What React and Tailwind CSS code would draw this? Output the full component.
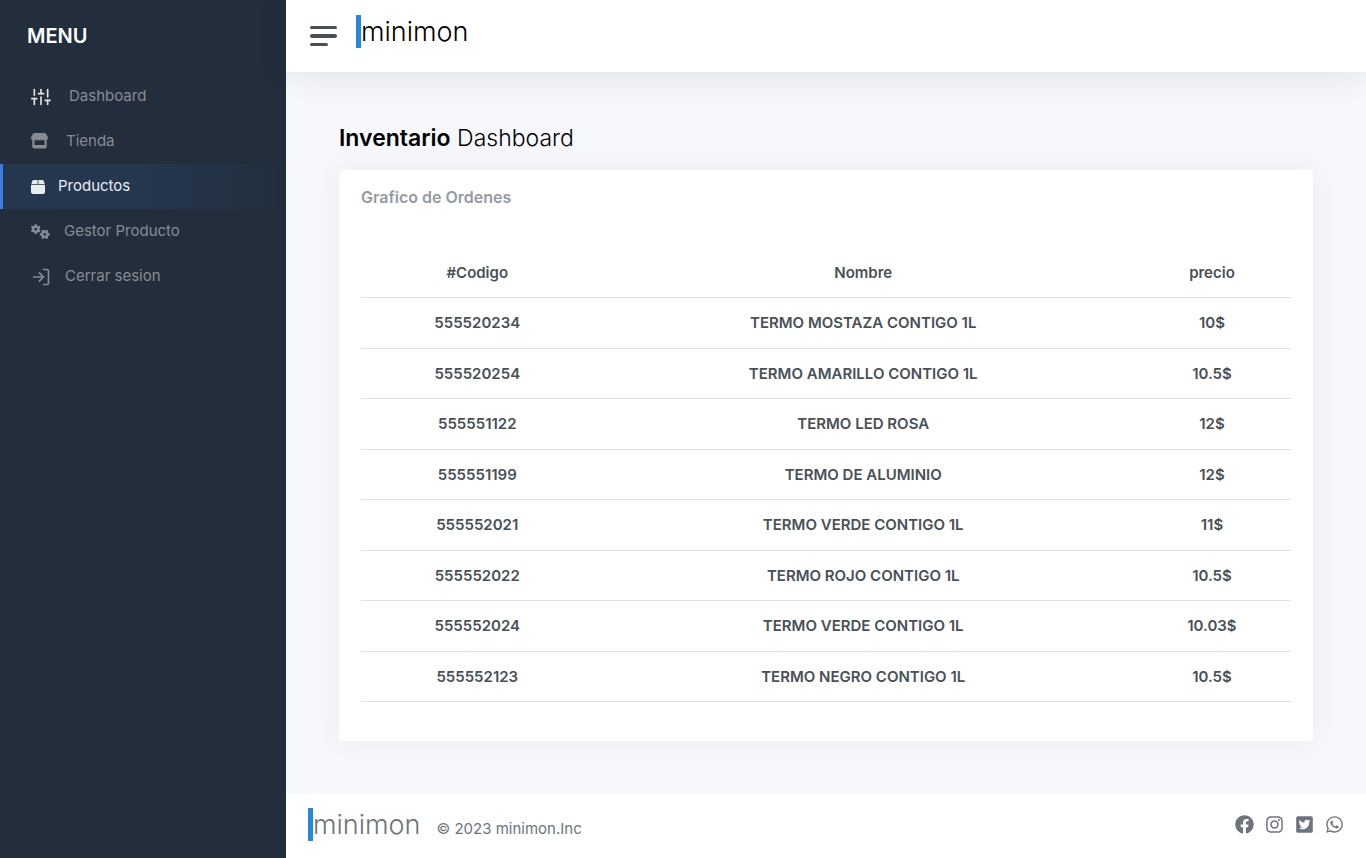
import { FiLogIn, FiSliders } from "react-icons/fi";
import { FaFacebook, FaInstagram, FaTwitterSquare, FaWhatsapp } from "react-icons/fa";
import { FaGears } from "react-icons/fa6";

const products = [
  ["555520234", "TERMO MOSTAZA CONTIGO 1L", "10$"],
  ["555520254", "TERMO AMARILLO CONTIGO 1L", "10.5$"],
  ["555551122", "TERMO LED ROSA", "12$"],
  ["555551199", "TERMO DE ALUMINIO", "12$"],
  ["555552021", "TERMO VERDE CONTIGO 1L", "11$"],
  ["555552022", "TERMO ROJO CONTIGO 1L", "10.5$"],
  ["555552024", "TERMO VERDE CONTIGO 1L", "10.03$"],
  ["555552123", "TERMO NEGRO CONTIGO 1L", "10.5$"],
];

const social = [
  ["Facebook", FaFacebook],
  ["Instagram", FaInstagram],
  ["Twitter", FaTwitterSquare],
  ["WhatsApp", FaWhatsapp],
];

function ShopIcon() {
  return (
    <svg width="17" height="17" viewBox="0 0 17 17" fill="currentColor" aria-hidden="true">
      <path d="M3.500 0h10c.8 0 1.300.3 1.700 1l1.500 2.800c.7 1.500-.1 3-1.700 3H2c-1.600 0-2.400-1.500-1.700-3L1.800 1c.4-.7.900-1 1.700-1z" />
      <path d="M1.300 6h2.200v6h10V6h2.200v7.500c0 1.200-.8 2-2 2H3.300c-1.200 0-2-.8-2-2z" />
      <path d="M3.500 6.500h10v.6l-1.500.4-1.700-.5-1.700.5-1.700-.5-1.700.5-1.700-.4z" />
    </svg>
  );
}

function BoxIcon() {
  return (
    <svg width="14" height="14" viewBox="0 0 14 14" fill="currentColor" aria-hidden="true">
      <path d="M2.900 0h3.700v4.200H.2l1-3C1.500.4 2.100 0 2.900 0z" />
      <path d="M7.400 0h3.700c.8 0 1.400.4 1.700 1.200l1 3H7.400z" />
      <path d="M0 5.100h14v7c0 1.100-.8 1.900-1.900 1.900H1.900C.8 14 0 13.200 0 12.100z" />
    </svg>
  );
}

function NavItem({ icon, gap, active, children }) {
  return (
    <li>
      <a
        href="#"
        aria-current={active ? "page" : undefined}
        className={`flex h-[45px] items-center border-l-[3px] pl-7 text-[15px] ${gap} ${
          active
            ? "border-[#3b7ddd] bg-linear-to-r from-[#25364f] from-50% to-[#222e3c] text-[#e9ecef]"
            : "border-transparent text-[#868c94]"
        }`}
      >
        {icon}
        <span>{children}</span>
      </a>
    </li>
  );
}

function Brand({ className }) {
  return (
    <span className={`border-l-[5px] border-[#2688dc] text-[27px] leading-[33px] font-light ${className}`}>
      minimon
    </span>
  );
}

export default function App() {
  return (
    <div className="flex min-h-screen bg-[#f5f7fb] font-['Inter',sans-serif]">
      <nav className="w-[286px] shrink-0 bg-[#222e3c]">
        <h2 className="px-[27px] pt-5 pb-[22px] text-xl leading-8 font-semibold text-white">MENU</h2>
        <ul>
          <NavItem icon={<FiSliders size={20} className="text-[#dfe2e6]" />} gap="gap-[18px]">
            Dashboard
          </NavItem>
          <NavItem icon={<ShopIcon />} gap="gap-[18px]">Tienda</NavItem>
          <NavItem icon={<BoxIcon />} gap="gap-[13px]" active>
            Productos
          </NavItem>
          <NavItem icon={<FaGears size={19} />} gap="gap-3.5">Gestor Producto</NavItem>
          <NavItem icon={<FiLogIn size={20} />} gap="gap-3.5">Cerrar sesion</NavItem>
        </ul>
      </nav>

      <div className="flex min-w-0 flex-1 flex-col">
        <header className="flex h-[72px] items-start bg-white pl-6 shadow-[0_0_32px_0_rgba(41,48,66,0.12)]">
          <button type="button" aria-label="Alternar menu" className="mt-[26px] flex w-[27px] flex-col gap-[5px]">
            <span className="h-[3px] w-[27px] rounded-sm bg-[#495057]" />
            <span className="h-1 w-[27px] rounded-sm bg-[#495057]" />
            <span className="h-[3px] w-[18px] rounded-sm bg-[#495057]" />
          </button>
          <a href="#" className="mt-[15px] ml-[19px] flex">
            <Brand className="text-black" />
          </a>
        </header>

        <main className="flex-1 px-[53px] pt-[50px] pb-[52px]">
          <h1 className="mb-4 text-[23px] leading-8 font-light text-black">
            <strong className="font-semibold">Inventario</strong> Dashboard
          </h1>
          <section className="rounded bg-white px-[22px] pt-[15px] pb-[39px] shadow-[0_0_28px_0_rgba(33,37,41,0.05)]">
            <h2 className="mb-[39px] text-base leading-6 font-semibold text-[#939ba2]">Grafico de Ordenes</h2>
            <table className="w-full table-fixed border-collapse text-center text-[15px] text-[#495057] [&_td]:pt-0.5 [&_th]:pt-0.5">
              <thead>
                <tr className="h-[49px] border-b border-[#dee2e6]">
                  <th scope="col" className="w-[25%] font-semibold">#Codigo</th>
                  <th scope="col" className="font-semibold">Nombre</th>
                  <th scope="col" className="w-[17%] font-semibold">precio</th>
                </tr>
              </thead>
              <tbody>
                {products.map(([code, name, price]) => (
                  <tr key={code} className="border-b border-[#dee2e6] font-semibold odd:h-[51px] even:h-[50px]">
                    <td>{code}</td>
                    <td>{name}</td>
                    <td>{price}</td>
                  </tr>
                ))}
              </tbody>
            </table>
          </section>
        </main>

        <footer className="flex items-start justify-between bg-white px-[22px] pt-3.5 pb-[17px] text-[#6c757d]">
          <div className="flex items-baseline gap-4">
            <a href="#" className="flex">
              <Brand className="text-[#6c757d]" />
            </a>
            <span className="text-[15px]">© 2023 minimon.Inc</span>
          </div>
          <ul className="flex h-8 items-center gap-[11px]">
            {social.map(([name, Icon]) => (
              <li key={name}>
                <a href="#" aria-label={name} className="block">
                  <Icon size={19} />
                </a>
              </li>
            ))}
          </ul>
        </footer>
      </div>
    </div>
  );
}
